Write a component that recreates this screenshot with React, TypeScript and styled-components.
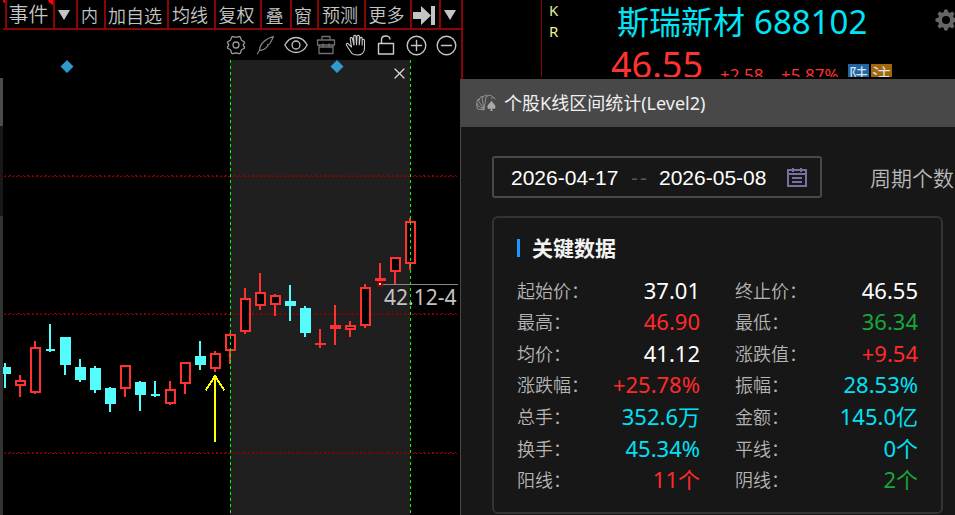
import React from 'react';
import styled, { createGlobalStyle } from 'styled-components';

const Global = createGlobalStyle`
  * { box-sizing: border-box; }
  body {
    margin: 0;
    background: #000;
    overflow: hidden;
    font-family: 'Noto Sans', 'Noto Sans CJK SC', sans-serif;
  }
  button, input { font: inherit; }
`;

const RED = '#ff3232';
const CYAN = '#54fcfc';
const LINE = '#8a0404';

const Page = styled.div`
  position: relative;
  display: grid;
  grid-template-columns: 463px 1fr;
  height: 100vh;
  overflow: hidden;
  background: #000;
`;

/* ---------- chart window ---------- */

const ChartWindow = styled.section`
  display: grid;
  grid-template-columns: 3px 1fr;
  border-right: 2px solid ${LINE};
`;

const Gutter = styled.div`
  background: linear-gradient(#000 78px, #4c4c4c 78px, #4c4c4c 126px, #181818 126px, #181818 216px, #333 216px);
`;

const ChartMain = styled.div`
  display: flex;
  flex-direction: column;
  min-width: 0;
`;

const MenuBar = styled.nav`
  display: flex;
  height: 30px;
  padding-left: 2px;
  border-bottom: 2px solid ${LINE};
  background: linear-gradient(45deg, transparent 50%, #f00 50%) left top / 2px 6px no-repeat;
`;

const MenuButton = styled.button<{ $w: number; $size?: number; $low?: boolean; $mark?: boolean }>`
  flex: none;
  display: flex;
  align-items: center;
  justify-content: center;
  width: ${(p) => p.$w}px;
  padding: ${(p) => (p.$low ? '2px' : '0')} 3px 0 0;
  border: 0;
  border-left: 2px solid ${LINE};
  background: ${(p) =>
    p.$mark ? 'linear-gradient(45deg, transparent 50%, #f00 50%) right top / 6px 6px no-repeat' : 'none'};
  color: #c4c4c4;
  font-family: 'Noto Sans CJK SC', sans-serif;
  font-weight: 350;
  font-size: ${(p) => p.$size ?? 18}px;
  line-height: 24px;
  white-space: nowrap;
`;

const ToolRow = styled.div`
  display: flex;
  justify-content: flex-end;
  height: 30px;
`;

const ToolButton = styled.button<{ $color: string }>`
  display: flex;
  align-items: center;
  justify-content: center;
  width: 30px;
  padding: 0;
  border: 0;
  background: none;
  color: ${(p) => p.$color};
`;

const ChartArea = styled.div`
  position: relative;
  flex: 1;
  overflow: hidden;
  svg { display: block; }
`;

const CloseButton = styled.button`
  position: absolute;
  top: 4px;
  left: 387px;
  display: flex;
  align-items: center;
  justify-content: center;
  width: 18px;
  height: 18px;
  padding: 0;
  border: 0;
  background: none;
  color: #ddd;
`;

/* ---------- quote header ---------- */

const Quote = styled.header`
  display: grid;
  grid-template-columns: 78px 1fr;
  height: 77px;
  overflow: hidden;
`;

const QuoteBody = styled.div`
  display: flex;
  border-left: 1px solid ${LINE};
  overflow: hidden;
`;

const Flags = styled.div`
  width: 53px;
  padding-left: 7px;
  color: #e6f58c;
  font-family: 'Noto Sans', sans-serif;
  font-size: 15px;
  line-height: 21px;
`;

const QuoteInfo = styled.div`
  flex: 1;
  padding-left: 16px;
`;

const StockName = styled.h1`
  display: flex;
  align-items: baseline;
  gap: 9px;
  margin: 0;
  padding-left: 6px;
  height: 43px;
  color: #00e5f5;
  font-weight: 400;
  font-size: 32px;
  line-height: 43px;
`;

const StockCode = styled.span`
  font-size: 33px;
`;

const PriceRow = styled.div`
  display: flex;
  align-items: flex-start;
  color: ${RED};
`;

const Price = styled.strong`
  width: 109px;
  font-weight: 400;
  font-size: 36px;
  line-height: 43px;
`;

const Change = styled.span<{ $w: number }>`
  width: ${(p) => p.$w}px;
  padding-top: 20px;
  font-size: 17px;
  line-height: 24px;
`;

const Tag = styled.span<{ $bg: string }>`
  width: 21px;
  height: 24px;
  margin: 21px 2px 0 0;
  background: ${(p) => p.$bg};
  color: #d8e4ec;
  font-family: 'Noto Sans CJK SC', sans-serif;
  font-weight: 350;
  font-size: 19px;
  line-height: 21px;
  text-align: center;
`;

const GearButton = styled.button`
  flex: none;
  width: 20px;
  height: 40px;
  padding: 0;
  border: 0;
  background: none;
  overflow: visible;
  color: #666;
  svg { display: block; }
`;

/* ---------- statistics dialog ---------- */

const Dialog = styled.section`
  position: absolute;
  top: 79px;
  left: 460px;
  right: 0;
  bottom: 0;
  border-left: 1px solid #484848;
  background: #171717;
  overflow: hidden;
`;

const TitleBar = styled.header`
  display: flex;
  align-items: center;
  gap: 7px;
  height: 48px;
  padding-left: 14px;
  background: #484848;
  color: #f0f0f0;
`;

const Title = styled.h2`
  margin: 0;
  font-family: 'Noto Sans', 'Noto Sans CJK SC', sans-serif;
  font-weight: 400;
  font-size: 18px;
  line-height: 26px;
`;

const DialogBody = styled.div`
  padding: 29px 12px 0 31px;
`;

const FilterRow = styled.div`
  display: flex;
  align-items: center;
  gap: 48px;
  margin-bottom: 18px;
  white-space: nowrap;
`;

const DateRange = styled.div`
  flex: none;
  display: flex;
  align-items: center;
  width: 330px;
  height: 42px;
  padding: 1px 0 0 17px;
  border: 2px solid #484848;
  border-radius: 3px;
  color: #fff;
  font-family: 'Liberation Sans', Arial, sans-serif;
  font-size: 21px;
`;

const DateInput = styled.input`
  width: 110px;
  padding: 0;
  border: 0;
  background: none;
  color: inherit;
  outline: 0;
`;

const Dashes = styled.span`
  width: 38px;
  padding-left: 10px;
  color: #55555f;
  letter-spacing: 2px;
`;

const CalendarButton = styled.button`
  display: flex;
  padding: 0;
  margin-left: 18px;
  border: 0;
  background: none;
  color: #7672a0;
`;

const PeriodLabel = styled.span`
  color: #b8b8b8;
  font-family: 'Noto Sans CJK SC', sans-serif;
  font-weight: 350;
  font-size: 21px;
  line-height: 30px;
`;

const Card = styled.section`
  padding: 15px 23px 17px;
  border: 2px solid #333;
  border-radius: 6px;
`;

const CardTitle = styled.h3`
  display: flex;
  align-items: center;
  gap: 12px;
  margin: 0 0 11px;
  color: #f2f2f2;
  font-weight: 700;
  font-size: 21px;
  line-height: 30px;
  &::before {
    content: '';
    width: 3px;
    height: 18px;
    background: #1a96ff;
  }
`;

const Stats = styled.dl`
  display: grid;
  grid-template-columns: 1fr 1fr;
  grid-auto-rows: 1fr;
  column-gap: 35px;
  min-height: 221px;
  margin: 0;
`;

const Stat = styled.div`
  display: flex;
  align-items: center;
  justify-content: space-between;
  white-space: nowrap;
`;

const StatLabel = styled.dt`
  color: #b4b4b4;
  font-family: 'Noto Sans CJK SC', sans-serif;
  font-weight: 350;
  font-size: 18px;
  line-height: 30px;
`;

const StatValue = styled.dd<{ $color: string }>`
  margin: 0;
  color: ${(p) => p.$color};
  font-size: 22px;
  line-height: 30px;
`;

/* ---------- data ---------- */

// x centre, high, body top, body bottom, low, kind (r: hollow rise, f: filled rise, c: fall), body width
type Candle = [number, number, number, number, number, 'r' | 'f' | 'c', number?];

const candles: Candle[] = [
  [5, 363, 367, 374, 388, 'c'],
  [20, 375, 380, 386, 397, 'r'],
  [35, 341, 347, 393, 394, 'r'],
  [50, 324, 349, 351, 352, 'c', 9],
  [65, 337, 337, 365, 375, 'c'],
  [80, 359, 367, 380, 382, 'c'],
  [95, 366, 368, 390, 393, 'c'],
  [110, 387, 388, 404, 412, 'c'],
  [125, 365, 365, 389, 397, 'r'],
  [140, 381, 382, 395, 411, 'c'],
  [155, 381, 394, 396, 397, 'c', 9],
  [170, 381, 389, 404, 405, 'r'],
  [185, 362, 362, 384, 394, 'r'],
  [200, 341, 356, 365, 370, 'c'],
  [215, 351, 353, 369, 372, 'r'],
  [230, 333, 334, 351, 364, 'r'],
  [245, 288, 298, 332, 334, 'r'],
  [260, 273, 292, 306, 310, 'r'],
  [275, 294, 295, 305, 316, 'r'],
  [290, 285, 301, 306, 321, 'c'],
  [305, 306, 308, 333, 337, 'c'],
  [320, 329, 343, 345, 348, 'f'],
  [335, 305, 325, 329, 345, 'f'],
  [350, 321, 325, 330, 337, 'r'],
  [365, 284, 287, 326, 328, 'r'],
  [380, 263, 278, 281, 284, 'f'],
  [395, 257, 257, 272, 285, 'r'],
  [410, 218, 221, 264, 270, 'r'],
];

const WHITE = '#ffffff';
const UP = '#ff2a2a';
const DOWN = '#16a83a';
const AQUA = '#00e1f5';

const stats: [string, string, string][] = [
  ['起始价', '37.01', WHITE],
  ['终止价', '46.55', WHITE],
  ['最高', '46.90', UP],
  ['最低', '36.34', DOWN],
  ['均价', '41.12', WHITE],
  ['涨跌值', '+9.54', UP],
  ['涨跌幅', '+25.78%', UP],
  ['振幅', '28.53%', AQUA],
  ['总手', '352.6万', AQUA],
  ['金额', '145.0亿', AQUA],
  ['换手', '45.34%', AQUA],
  ['平线', '0个', AQUA],
  ['阳线', '11个', UP],
  ['阴线', '2个', DOWN],
];

/* ---------- drawings ---------- */

const stroke = { fill: 'none', stroke: 'currentColor', strokeLinecap: 'round', strokeLinejoin: 'round' } as const;

const DownTriangle = () => (
  <svg width="12" height="10" viewBox="0 0 12 10"><path d="M0 0h12L6 10z" fill="currentColor" /></svg>
);

const SkipEnd = () => (
  <svg width="22" height="19" viewBox="0 0 22 19" fill="currentColor">
    <path d="M0 6h8V0l10 9.500L8 19v-6H0zM18 0h4v19h-4z" />
  </svg>
);

const Settings = () => (
  <svg width="20" height="20" viewBox="0 0 20 20" {...stroke} strokeWidth="1.300">
    <path d="M6.500 1.500c1 0 2 .7 3.500.7s2.500-.7 3.500-.7c1.300 0 1.300 2.500 2 3.600.8 1 2.600.9 3 2.200.3 1-1.200 1.700-1.200 2.700s1.500 1.700 1.200 2.700c-.4 1.300-2.200 1.200-3 2.200-.7 1.100-.7 3.800-2 3.800-1 0-2-.7-3.500-.7s-2.500.7-3.500.7c-1.300 0-1.300-2.700-2-3.800-.8-1-2.600-.9-3-2.200-.3-1 1.200-1.700 1.200-2.700S1.200 8.300 1.500 7.300c.4-1.300 2.200-1.200 3-2.200.7-1.100.7-3.600 2-3.600z" />
    <circle cx="10" cy="10" r="3" />
  </svg>
);

const Quill = () => (
  <svg width="20" height="20" viewBox="0 0 20 20" {...stroke} strokeWidth="1.200">
    <path d="M1.500 18.500 4 14.500M3.500 15.500C3.500 9.500 9 3.500 17.500 1.500c-1.500 2.500-2 5-4 7.500l-2 .5.500 1.200C10 13.500 7.500 15.500 3.500 15.500z" />
  </svg>
);

const Eye = () => (
  <svg width="24" height="20" viewBox="0 0 24 20" {...stroke} strokeWidth="1.300">
    <path d="M.8 10C3.500 5 7.500 2.500 12 2.500S20.500 5 23.200 10C20.500 15 16.500 17.500 12 17.500S3.500 15 .8 10z" />
    <circle cx="12" cy="10" r="4" />
  </svg>
);

const Toolbox = () => (
  <svg width="20" height="20" viewBox="0 0 20 20" {...stroke} strokeWidth="1.300">
    <path d="M6 5V1.500h8V5M1.500 5h17v5h-17zM3 10v8.500h14V10M7 9v3M13 9v3M3 12h14" />
  </svg>
);

const Hand = () => (
  <svg width="22" height="22" viewBox="0 0 22 22" {...stroke} strokeWidth="1.100">
    <path d="M6.500 13 3.300 9.800c-1-1-2.600.1-1.800 1.400l4.700 7.300C7.500 20.500 9.500 21 12.500 21c4.500 0 7-3 7-7V6.500c0-1.700-2.300-1.700-2.300 0V11M6.500 13 5.200 5c-.2-1.600 1.900-2 2.300-.4L9 11M9 11 8.700 2.700c0-1.700 2.300-1.800 2.400 0l.4 8M11.500 10.700 12 2.500c.1-1.700 2.400-1.600 2.400.1l-.2 8.200M14.300 10.800l.6-6.300c.2-1.600 2.400-1.400 2.300.3V11" />
  </svg>
);

const OpenLock = () => (
  <svg width="18" height="20" viewBox="0 0 18 20" {...stroke} strokeWidth="1.400">
    <path d="M1.500 8.500h15v10.500h-15zM4.500 8.500V4.500C4.500 0 13 0 13 4" />
  </svg>
);

const Zoom = ({ plus }: { plus?: boolean }) => (
  <svg width="22" height="22" viewBox="0 0 22 22" {...stroke} strokeWidth="1.400">
    <circle cx="11.500" cy="11.500" r="9.300" /><path d={plus ? 'M6.500 11.500h10M11.500 6.500v10' : 'M6.500 11.500h10'} />
  </svg>
);

const GearSolid = () => (
  <svg width="22" height="22" viewBox="-11 -11 22 22">
    <circle r="6" fill="none" stroke="currentColor" strokeWidth="4" />
    {[0, 45, 90, 135, 180, 225, 270, 315].map((a) => (
      <path key={a} d="M-2.500 -7L-1.500 -10.500H1.500L2.500 -7z" fill="currentColor" transform={`rotate(${a})`} />
    ))}
  </svg>
);

const CardFan = () => (
  <svg width="22" height="20" viewBox="0 0 22 20">
    <g fill="none" stroke="#909090" strokeWidth="1" strokeLinejoin="round">
      <path d="M9 17 2.500 16 1.500 11.500 3.500 11M9 17 1.500 11.500 2.500 6.500 5 6.500M9 17 3.500 7.500 6 3.500 8.500 4M9 17 7 4.500 10.500 2 12.500 3M9 17 11 3.500 15 2 17.500 3.500 16.500 6M17.500 3.500 20.500 6" />
    </g>
    <path d="M16.500 7.500c1 2.500 4 4 4 6.500 0 2-2.300 2.500-3.500 1.200l.7 2.800h-2.500l.7-2.800c-1.300 1.300-3.500.8-3.500-1.200 0-2.500 3.100-4 4.100-6.500z" fill="#a8a8a8" />
  </svg>
);

const Calendar = () => (
  <svg width="20" height="19" viewBox="0 0 20 19" fill="none" stroke="currentColor" strokeWidth="2">
    <path d="M1 2h18v16H1zM1 6h18M5 10h10M5 14h10M6 0v4M14 0v4" />
  </svg>
);

const CandleMark = ({ c }: { c: Candle }) => {
  const [x, high, top, bottom, low, kind, w = 11] = c;
  const color = kind === 'c' ? CYAN : RED;
  const left = x - Math.floor(w / 2);
  return (
    <g fill={color}>
      <rect x={x - 1} y={high} width="2" height={top - high} />
      <rect x={x - 1} y={bottom} width="2" height={low - bottom} />
      {kind === 'r' ? (
        <rect x={left + 1} y={top + 1} width={w - 2} height={bottom - top - 2} fill="#000" stroke={color} strokeWidth="2" />
      ) : (
        <rect x={left} y={top} width={w} height={bottom - top} />
      )}
    </g>
  );
};

const CandleChart = () => (
  <svg width="457" height="455" viewBox="3 60 457 455" shapeRendering="crispEdges" role="img" aria-label="K线图">
    <rect x="230" y="60" width="180" height="455" fill="#1f1f1f" />
    {[176, 314, 453].map((y) => (
      <g key={y} stroke="#900000">
        <path d={`M4 ${y + 0.5}H457`} strokeDasharray="2 2" />
        <path d={`M5 ${y - 0.5}H457`} strokeDasharray="1 3 2 3" />
      </g>
    ))}
    {candles.map((c) => <CandleMark key={c[0]} c={c} />)}
    <path d="M383 284.500H458" stroke="#888" />
    <rect x="377" y="281" width="6" height="6" fill="#8a0404" />
    <rect x="379" y="283" width="2" height="2" fill="#ddd" />
    <text x="384" y="305" fill="#c4c4c4" fontSize="21" fontFamily="Noto Sans, sans-serif">42.12-4</text>
    <path d="M230.500 60V515M410.500 60V515" stroke="#00ff00" strokeDasharray="3 3" />
    <g fill="#3399cc" shapeRendering="auto">
      <path d="M67 60l6.500 6.500L67 73l-6.500-6.500zM337 60l6.500 6.500L337 73l-6.500-6.500z" />
    </g>
    <path d="M215 376V442M205.500 390.500 215 376 224.500 390.500" fill="none" stroke="#ff0" strokeWidth="2" />
  </svg>
);

const tools: [string, string, React.ReactNode][] = [
  ['设置', '#9a9a9a', <Settings />],
  ['画线', '#858585', <Quill />],
  ['显示', '#c4c4c4', <Eye />],
  ['工具箱', '#707070', <Toolbox />],
  ['拖动', '#ccc', <Hand />],
  ['解锁', '#ccc', <OpenLock />],
  ['放大', '#c4c4c4', <Zoom plus />],
  ['缩小', '#c4c4c4', <Zoom />],
];

export default function App() {
  return (
    <>
      <Global />
      <Page>
        <ChartWindow>
          <Gutter />
          <ChartMain>
            <MenuBar>
              <MenuButton $w={48} $size={20} $mark>事件</MenuButton>
              <MenuButton $w={23} $low aria-label="事件选项"><DownTriangle /></MenuButton>
              <MenuButton $w={28} $size={17} $low>内</MenuButton>
              <MenuButton $w={63} $low>加自选</MenuButton>
              <MenuButton $w={47}>均线</MenuButton>
              <MenuButton $w={46}>复权</MenuButton>
              <MenuButton $w={30} $low>叠</MenuButton>
              <MenuButton $w={27} $low>窗</MenuButton>
              <MenuButton $w={47}>预测</MenuButton>
              <MenuButton $w={46}>更多</MenuButton>
              <MenuButton $w={29} $low aria-label="最后"><SkipEnd /></MenuButton>
              <MenuButton $w={22} $low aria-label="更多选项"><DownTriangle /></MenuButton>
            </MenuBar>
            <ToolRow>
              {tools.map(([label, color, icon]) => (
                <ToolButton key={label} $color={color} aria-label={label}>{icon}</ToolButton>
              ))}
            </ToolRow>
            <ChartArea>
              <CandleChart />
              <CloseButton aria-label="关闭区间">
                <svg width="11" height="11" viewBox="0 0 11 11" {...stroke} strokeWidth="1.200"><path d="M1 1l9 9M10 1l-9 9" /></svg>
              </CloseButton>
            </ChartArea>
          </ChartMain>
        </ChartWindow>

        <Quote>
          <div />
          <QuoteBody>
            <Flags>
              <div>K</div>
              <div>R</div>
            </Flags>
            <QuoteInfo>
              <StockName>斯瑞新材 <StockCode>688102</StockCode></StockName>
              <PriceRow>
                <Price>46.55</Price>
                <Change $w={61}>+2.58</Change>
                <Change $w={67}>+5.87%</Change>
                <Tag $bg="#1f66a3">陆</Tag>
                <Tag $bg="#a3660c">注</Tag>
              </PriceRow>
            </QuoteInfo>
            <GearButton aria-label="设置"><GearSolid /></GearButton>
          </QuoteBody>
        </Quote>

        <Dialog role="dialog" aria-labelledby="stat-title">
          <TitleBar>
            <CardFan />
            <Title id="stat-title">个股K线区间统计(Level2)</Title>
          </TitleBar>
          <DialogBody>
            <FilterRow>
              <DateRange>
                <DateInput aria-label="开始日期" defaultValue="2026-04-17" />
                <Dashes>--</Dashes>
                <DateInput aria-label="结束日期" defaultValue="2026-05-08" />
                <CalendarButton aria-label="选择日期"><Calendar /></CalendarButton>
              </DateRange>
              <PeriodLabel>周期个数</PeriodLabel>
            </FilterRow>
            <Card>
              <CardTitle>关键数据</CardTitle>
              <Stats>
                {stats.map(([label, value, color]) => (
                  <Stat key={label}>
                    <StatLabel>{label}：</StatLabel>
                    <StatValue $color={color}>{value}</StatValue>
                  </Stat>
                ))}
              </Stats>
            </Card>
          </DialogBody>
        </Dialog>
      </Page>
    </>
  );
}
